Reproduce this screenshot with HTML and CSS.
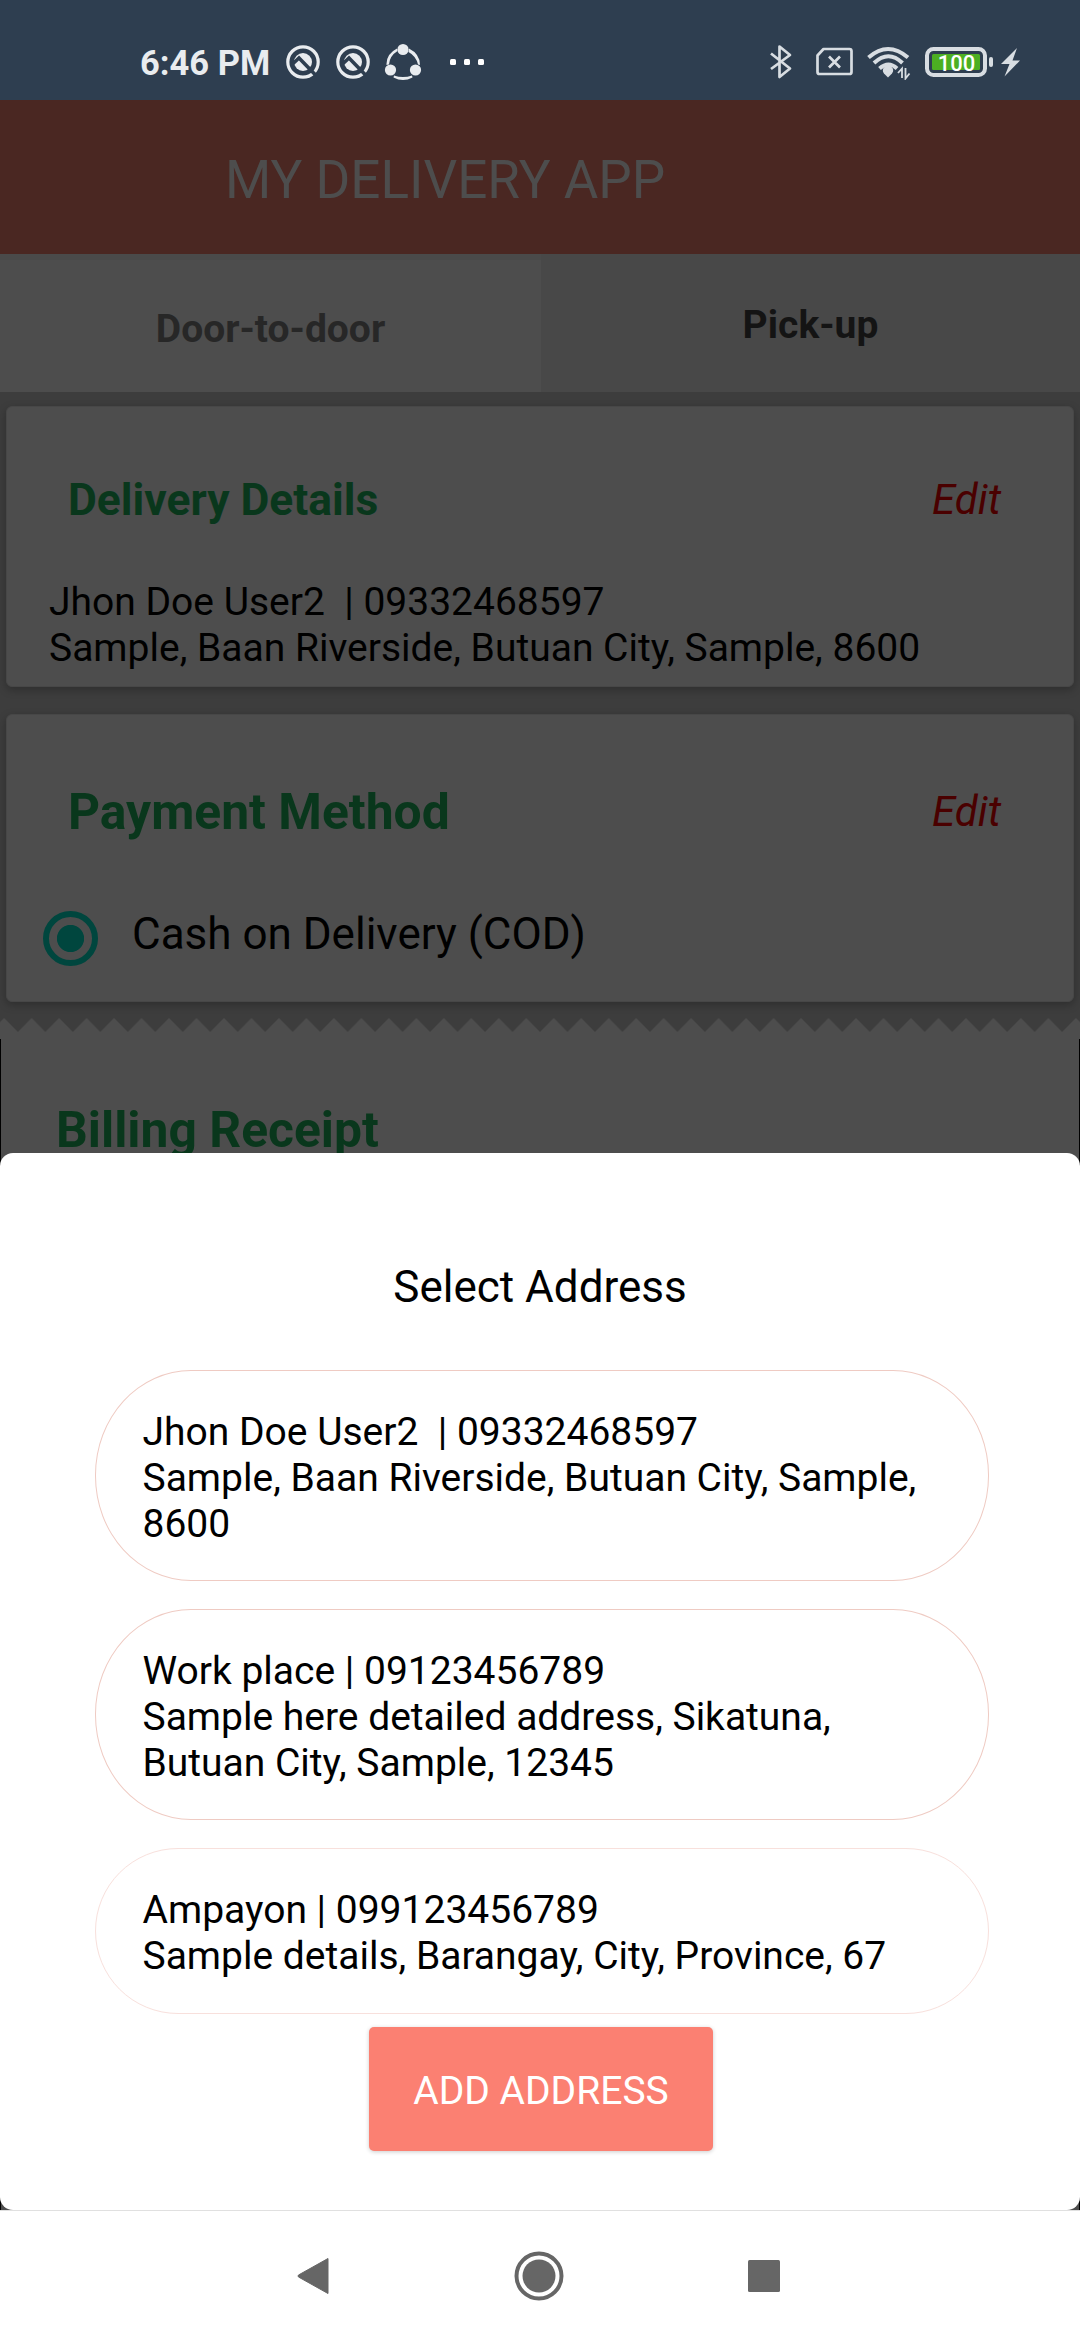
FILE: index.html
```html
<!DOCTYPE html>
<html lang="en">
<head>
<meta charset="utf-8">
<title>My Delivery App</title>
<link rel="stylesheet" href="styles.css">
</head>
<body>
<div class="screen">
  <div class="status">
    <span class="clock">6:46 PM</span>
    <div class="notices">
      <svg class="badge" width="34" height="34" viewBox="0 0 34 34"><circle cx="17" cy="17" r="15.2" fill="none" stroke="#e9ecef" stroke-width="3.2"/><circle cx="17" cy="17" r="9" fill="#e9ecef"/><path d="M6 19.500L13 13L30 30.500" fill="none" stroke="#2e3e50" stroke-width="3.600"/></svg>
      <svg class="badge" width="34" height="34" viewBox="0 0 34 34"><circle cx="17" cy="17" r="15.2" fill="none" stroke="#e9ecef" stroke-width="3.2"/><circle cx="17" cy="17" r="9" fill="#e9ecef"/><path d="M6 19.500L13 13L30 30.500" fill="none" stroke="#2e3e50" stroke-width="3.600"/></svg>
      <svg class="share" width="38" height="38" viewBox="0 0 38 38" fill="#e9ecef"><circle cx="19" cy="6.500" r="5.600"/><circle cx="6.500" cy="27" r="5.600"/><circle cx="31.500" cy="27" r="5.600"/><path d="M13 5.500Q2 11 2.500 22L5 21.500Q5.500 13 13.500 8ZM25 5.500Q36 11 36 22L34 21.500Q32 13 24.500 9ZM10 32.500Q19 35.500 28 32.500L28.500 34.500Q19 39.500 9.500 34.500Z"/></svg>
      <svg width="36" height="8" viewBox="0 0 36 8" fill="#fff"><rect x="1" y="1" width="6" height="6" rx="1.500"/><rect x="15" y="1" width="6" height="6" rx="1.500"/><rect x="29" y="1" width="6" height="6" rx="1.500"/></svg>
    </div>
    <svg class="system" width="256" height="40" viewBox="0 0 256 40">
      <g fill="none" stroke="#d8dde2" stroke-width="2.700" stroke-linejoin="round">
        <path d="M1 13.500L20 28.500L9.500 37V6.500L20 15L1 29"/>
        <path d="M47.500 15.500L53.500 9H79.500Q81.500 9 81.500 11V32Q81.500 34 79.500 34H49.500Q47.500 34 47.500 32Z"/>
        <path d="M59 16.500L70 27.500M70 16.500L59 27.500"/>
      </g>
      <g fill="none" stroke="#d8dde2" stroke-width="4">
        <path d="M98.500 17.500Q118 0.500 138 17.500"/>
        <path d="M104 23Q118.500 9.500 132.500 23"/>
        <path d="M109.500 28.500Q118.500 20.500 127 28.500"/>
      </g>
      <path d="M114 33.500A5 5 0 1 1 122 33.500L118 37.500Z" fill="#d8dde2"/>
      <path d="M128 33L132 28.500V38M135.500 28V38.500L139.500 33.500" fill="none" stroke="#d8dde2" stroke-width="1.800"/>
      <rect x="157" y="9" width="58" height="26" rx="6.500" fill="none" stroke="#d8dde2" stroke-width="4"/>
      <rect x="162" y="14" width="48" height="16" rx="1.500" fill="#4caf22"/>
      <text class="level" x="186.500" y="30.700" text-anchor="middle">100</text>
      <rect x="219" y="17" width="4" height="10" rx="2" fill="#d8dde2"/>
      <path d="M247 8L231 24H239.500L234.500 36.500L250 20.500H242.500Z" fill="#d8dde2"/>
    </svg>
  </div>

  <header class="appbar">MY DELIVERY APP</header>

  <nav class="tabs">
    <div class="tab tab-door">Door-to-door</div>
    <div class="tab tab-pickup">Pick-up</div>
  </nav>

  <main class="content">
    <section class="card card-delivery">
      <div class="card-head">
        <h2 class="delivery-title">Delivery Details</h2>
        <span class="edit">Edit</span>
      </div>
      <p class="address">Jhon Doe User2&nbsp; | 09332468597<br>Sample, Baan Riverside, Butuan City, Sample, 8600</p>
    </section>

    <section class="card card-payment">
      <div class="card-head">
        <h2 class="large-title">Payment Method</h2>
        <span class="edit">Edit</span>
      </div>
      <div class="option">
        <span class="radio"></span>
        <span class="option-label">Cash on Delivery (COD)</span>
      </div>
    </section>

    <svg class="zigzag" width="1080" height="14" viewBox="0 0 1080 14">
      <defs><pattern id="teeth" x="-9.600" y="0" width="27.480" height="14" patternUnits="userSpaceOnUse"><path d="M0 14L13.740 0L27.480 14Z" fill="#4d4d4d"/></pattern></defs>
      <rect width="1080" height="14" fill="url(#teeth)"/>
    </svg>
    <section class="receipt">
      <div class="receipt-body"><h2 class="large-title">Billing Receipt</h2></div>
    </section>
  </main>

  <div class="sheet">
    <h3 class="sheet-title">Select Address</h3>
    <ul class="choices">
      <li class="choice">Jhon Doe User2&nbsp; | 09332468597<br>Sample, Baan Riverside, Butuan City, Sample,<br>8600</li>
      <li class="choice">Work place | 09123456789<br>Sample here detailed address, Sikatuna,<br>Butuan City, Sample, 12345</li>
      <li class="choice choice-short">Ampayon | 099123456789<br>Sample details, Barangay, City, Province, 67</li>
    </ul>
    <button class="add">ADD ADDRESS</button>
  </div>

  <footer class="navbar">
    <svg width="32" height="38" viewBox="0 0 32 38"><path d="M31 1.500V36.500L1.500 20Q0.500 19 1.500 18Z" fill="#666" stroke="#666" stroke-linejoin="round"/></svg>
    <svg width="50" height="50" viewBox="0 0 50 50"><circle cx="25" cy="25" r="22.500" fill="none" stroke="#666" stroke-width="4"/><circle cx="25" cy="25" r="16.500" fill="#666"/></svg>
    <svg width="32" height="32" viewBox="0 0 32 32"><rect width="32" height="32" rx="1.500" fill="#666"/></svg>
  </footer>
</div>
</body>
</html>
```
FILE: styles.css
```css
* { box-sizing: border-box; margin: 0; padding: 0; }

body { font-family: Roboto, "Liberation Sans", sans-serif; }

.screen {
  position: relative;
  display: flex;
  flex-direction: column;
  width: 1080px;
  height: 2340px;
  overflow: hidden;
  background: #3d3d3d;
}

.status {
  display: flex;
  align-items: flex-start;
  height: 100px;
  padding: 42px 54px 0 140px;
  background: #2e3e50;
}
.clock {
  width: 146px;
  font-size: 34.500px;
  line-height: 42px;
  font-weight: 700;
  color: #e9ecef;
  white-space: nowrap;
}
.notices { display: flex; align-items: center; height: 40px; }
.badge { margin-right: 16px; }
.share { margin: 0 27px 0 -2px; }
.system { margin: -2px 0 0 auto; }
.level { font-size: 22px; font-weight: 500; fill: #fff; }

.appbar {
  height: 154px;
  padding: 48px 0 0 225px;
  background: #4a2722;
  color: #4d4d4d;
  font-size: 53px;
  line-height: 64px;
}

.tabs { display: flex; height: 138px; background: #484848; }
.tab {
  flex: 1;
  font-size: 39px;
  line-height: 46px;
  font-weight: 700;
  text-align: center;
}
.tab-door {
  flex: 0 0 541px;
  padding-top: 46px;
  border-top: 6px solid #4a4a4a;
  background: #4d4d4d;
  color: #272727;
}
.tab-pickup { padding-top: 48px; color: #141414; }

.content { padding-top: 14px; }
.card {
  margin: 0 6px 27px;
  border: 1px solid #474747;
  border-radius: 6px;
  background: #4d4d4d;
  box-shadow: 0 3px 8px rgba(0, 0, 0, 0.250);
}
.card-delivery { height: 281px; padding: 67px 0 0 42px; }
.card-payment { height: 288px; margin-bottom: 16px; padding: 68px 0 0 36px; }

.card-head {
  display: flex;
  justify-content: space-between;
  align-items: flex-start;
  height: 105px;
  padding: 0 72px 0 19px;
}
.card-payment .card-head { height: 127px; padding-left: 25px; }

.delivery-title { font-size: 44.400px; line-height: 52px; font-weight: 700; color: #09371c; }
.large-title { font-size: 49.800px; line-height: 58px; font-weight: 700; color: #09371c; }
.edit { margin-top: 2px; font-size: 42px; line-height: 48px; font-style: italic; color: #4a0000; }
.card-payment .edit { margin-top: 5px; }

.address { font-size: 39px; line-height: 46px; color: #000; }

.option { display: flex; align-items: flex-start; }
.radio {
  width: 55px;
  height: 55px;
  margin-top: 1px;
  border: 6px solid #00463e;
  border-radius: 50%;
  background: radial-gradient(circle, #00463e 13.200px, transparent 14px);
}
.option-label { margin: -2px 0 0 34px; font-size: 44px; line-height: 52px; color: #000; }

.zigzag { display: block; }
.receipt { padding-top: 7px; background: #4d4d4d; }
.receipt-body {
  height: 1200px;
  padding: 62px 0 0 55px;
  border: solid #000;
  border-width: 0 1px;
}

.sheet {
  position: absolute;
  top: 1153px;
  left: 0;
  display: flex;
  flex-direction: column;
  align-items: center;
  width: 1080px;
  height: 1057px;
  padding-top: 108px;
  border-radius: 13px;
  background: #fff;
}
.sheet-title { font-size: 44px; line-height: 52px; font-weight: 400; color: #000; }
.choices {
  display: flex;
  flex-direction: column;
  gap: 28px;
  width: 894px;
  margin: 57px 0 0 3px;
  list-style: none;
}
.choice {
  height: 211px;
  padding: 38px 0 0 47px;
  border: 1px solid #efcbc3;
  border-radius: 96px / 105px;
  color: #000;
  font-size: 39px;
  line-height: 46px;
  white-space: nowrap;
}
.choice-short { height: 166px; border-color: #f8e0dc; border-radius: 83px; }
.add {
  width: 344px;
  height: 124px;
  margin: 13px 0 0 2px;
  padding-top: 4px;
  border: 0;
  border-radius: 5px;
  background: #fb8072;
  box-shadow: 0 1px 4px rgba(0, 0, 0, 0.200);
  color: #fff;
  font-family: inherit;
  font-size: 39px;
  line-height: 46px;
}

.navbar {
  position: absolute;
  top: 2210px;
  left: 0;
  display: flex;
  justify-content: space-between;
  align-items: center;
  width: 1080px;
  height: 130px;
  padding: 0 300px 0 297px;
  border-top: 1px solid #e0e0e0;
  background: #fff;
}
```
